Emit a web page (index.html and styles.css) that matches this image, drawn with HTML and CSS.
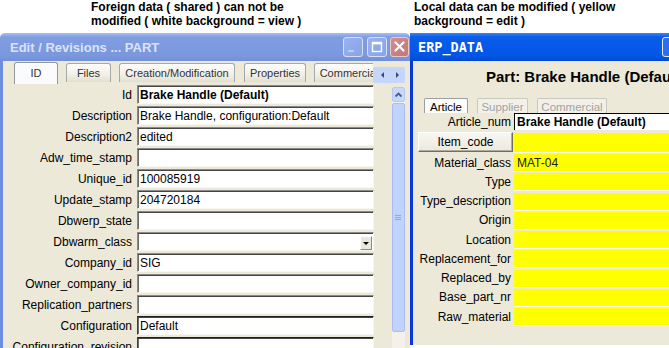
FILE: index.html
```html
<!DOCTYPE html>
<html lang="en">
<head>
  <meta charset="UTF-8">
  <title>Shared data vs local data</title>
  <link rel="stylesheet" href="styles.css">
</head>
<body>
  <div class="captions">
    <p class="cap cap-left">Foreign data ( shared ) can not be<br>modified ( white background = view )</p>
    <p class="cap">Local data can be modified ( yellow<br>background = edit )</p>
  </div>

  <div class="desk">
    <!-- shared window (inactive) -->
    <div class="win win-shared">
      <div class="titlebar">
        <span class="title">Edit / Revisions ... PART</span>
        <span class="tbtn"><svg width="18" height="18" viewBox="0 0 18 18"><rect x="4" y="12" width="6" height="2" fill="#b9cbf3"/></svg></span>
        <span class="tbtn"><svg width="18" height="18" viewBox="0 0 18 18"><rect x="4.5" y="4.5" width="9" height="9" fill="none" stroke="#fff" stroke-width="1.4"/><rect x="4" y="4" width="10" height="2.4" fill="#fff"/></svg></span>
        <span class="tbtn close"><svg width="17" height="18" viewBox="0 0 17 18"><path d="M4.5 4.5 L12.5 12.5 M12.5 4.5 L4.5 12.5" stroke="#fff" stroke-width="2.2" stroke-linecap="round"/></svg></span>
      </div>
      <div class="wbody">
        <div class="tabstrip">
          <div class="tabs">
            <span class="tab on t-id">ID</span>
            <span class="tab t-files">Files</span>
            <span class="tab t-crea">Creation/Modification</span>
            <span class="tab t-prop">Properties</span>
            <span class="tab t-comm">Commercial</span>
          </div>
          <div class="tabscroll">
            <svg width="32" height="16" viewBox="0 0 32 16"><path d="M11 5 L8 8 L11 11 Z" fill="#3b4a6b"/><path d="M23 5 L26 8 L23 11 Z" fill="#3b4a6b"/></svg>
          </div>
        </div>
        <div class="panel">
          <div class="form">
            <div class="row"><span class="lbl">Id</span><span class="field bold">Brake Handle (Default)</span></div>
            <div class="row"><span class="lbl">Description</span><span class="field">Brake Handle, configuration:Default</span></div>
            <div class="row"><span class="lbl">Description2</span><span class="field">edited</span></div>
            <div class="row"><span class="lbl">Adw_time_stamp</span><span class="field"></span></div>
            <div class="row"><span class="lbl">Unique_id</span><span class="field">100085919</span></div>
            <div class="row"><span class="lbl">Update_stamp</span><span class="field">204720184</span></div>
            <div class="row"><span class="lbl">Dbwerp_state</span><span class="field"></span></div>
            <div class="row"><span class="lbl">Dbwarm_class</span><span class="field combo"><span class="drop"><svg width="10" height="12" viewBox="0 0 10 12"><path d="M2 5 L8 5 L5 8 Z" fill="#000"/></svg></span></span></div>
            <div class="row"><span class="lbl">Company_id</span><span class="field">SIG</span></div>
            <div class="row"><span class="lbl">Owner_company_id</span><span class="field"></span></div>
            <div class="row"><span class="lbl">Replication_partners</span><span class="field"></span></div>
            <div class="row"><span class="lbl">Configuration</span><span class="field dark">Default</span></div>
            <div class="row"><span class="lbl">Configuration_revision</span><span class="field dark"></span></div>
          </div>
          <div class="vscroll">
            <div class="upbtn"><svg width="11" height="12" viewBox="0 0 11 12"><path d="M2.5 7.5 L5.5 4.5 L8.5 7.5" fill="none" stroke="#4a5f86" stroke-width="1.8"/></svg></div>
            <div class="thumb"><svg width="7" height="7" viewBox="0 0 7 7"><path d="M0 1.5 H6 M0 3.5 H6 M0 5.5 H6" stroke="#8ea7de" stroke-width="1"/></svg></div>
          </div>
        </div>
      </div>
    </div>

    <!-- local window (active) -->
    <div class="win win-local">
      <div class="titlebar">
        <span class="title mono">ERP_DATA</span>
        <span class="tbtn peek"></span>
      </div>
      <div class="lbody">
        <div class="heading">Part: Brake Handle (Default)</div>
        <div class="rtabs">
          <span class="rtab on r-art">Article</span>
          <span class="rtab r-sup">Supplier</span>
          <span class="rtab r-com">Commercial</span>
        </div>
        <div class="rrow">
          <span class="lbl">Article_num</span><span class="rfield white">Brake Handle (Default)</span>
        </div>
        <div class="rrow btnrow">
          <span class="btn">Item_code</span><span class="rfield yellow"></span>
        </div>
        <div class="rlist">
          <div class="rrow"><span class="lbl">Material_class</span><span class="rfield yellow">MAT-04</span></div>
          <div class="rrow"><span class="lbl">Type</span><span class="rfield yellow"></span></div>
          <div class="rrow"><span class="lbl">Type_description</span><span class="rfield yellow"></span></div>
          <div class="rrow"><span class="lbl">Origin</span><span class="rfield yellow"></span></div>
          <div class="rrow"><span class="lbl">Location</span><span class="rfield yellow"></span></div>
          <div class="rrow"><span class="lbl">Replacement_for</span><span class="rfield yellow"></span></div>
          <div class="rrow"><span class="lbl">Replaced_by</span><span class="rfield yellow"></span></div>
          <div class="rrow"><span class="lbl">Base_part_nr</span><span class="rfield yellow"></span></div>
          <div class="rrow"><span class="lbl">Raw_material</span><span class="rfield yellow"></span></div>
        </div>
      </div>
    </div>
  </div>
</body>
</html>
```

FILE: styles.css
```css
* { box-sizing: border-box; }
body { margin: 0; width: 669px; height: 348px; overflow: hidden; background: #fff; color: #000; font-family: "Liberation Sans", Arial, sans-serif; font-size: 12px; }

.captions { display: flex; height: 33px; }
.cap { margin: 0; font-weight: bold; font-size: 12px; line-height: 14px; white-space: nowrap; }
.cap-left { width: 414px; padding-left: 91px; }

.desk { display: flex; align-items: flex-start; height: 315px; }
.win { display: flex; flex-direction: column; overflow: hidden; }
.win-shared { width: 410px; height: 315px; flex-shrink: 0; }
.win-local { flex: 1; height: 312px; }

/* title bars */
.titlebar { height: 28px; flex-shrink: 0; display: flex; align-items: center; overflow: hidden; }
.win-shared .titlebar { padding: 0 1px 0 10px; border-radius: 5px 5px 0 0; background: linear-gradient(#aabff0, #819de2 4px, #7b97dd 80%, #7390d6); }
.win-local .titlebar { padding-left: 8px; background: linear-gradient(#3d83f5, #0a5de9 4px, #0256e6 80%, #0049d0); }
.title { flex: 1; white-space: nowrap; font: bold 13px "Liberation Sans", Arial, sans-serif; color: #d9e3f8; }
.title.mono { font: bold 13.5px "DejaVu Sans Mono", monospace; color: #fff; }
.tbtn { width: 20px; height: 20px; margin-left: 4px; display: flex; align-items: center; justify-content: center; border: 1px solid #d6e1f8; border-radius: 3px; background: linear-gradient(135deg, #9ab3ee, #86a3e8); }
.tbtn.close { width: 19px; margin-left: 3px; border-color: #e7c9c9; background: linear-gradient(135deg, #d48d8f, #c2777a); }
.tbtn.peek { width: 21px; margin-right: -14px; border-color: #e4ecff; background: #2c6ef2; }

/* shared window body */
.wbody { flex: 1; display: flex; flex-direction: column; overflow: hidden; background: #ece9d8; border-left: 3px solid #6d8de0; padding-right: 5px; }
.tabstrip { height: 23px; flex-shrink: 0; display: flex; align-items: flex-end; padding-left: 11px; }
.tabs { flex: 1; display: flex; align-items: flex-end; gap: 9px; overflow: hidden; height: 23px; }
.tab { flex-shrink: 0; height: 19px; margin-bottom: 2px; text-align: center; font-size: 11px; line-height: 18px; color: #333; white-space: nowrap; overflow: hidden; border: 1px solid #a3a9a9; border-bottom: 0; border-radius: 3px 3px 0 0; background: linear-gradient(#fdfdfc, #f1efe7 60%, #e2dfd2); }
.tab.on { height: 22px; margin-bottom: 0; line-height: 20px; background: #fbfbfd; border-color: #919b9c; }
.t-id { width: 44px; }
.t-files { width: 45px; margin-left: -1px; }
.t-crea { width: 116px; margin-left: -1px; }
.t-prop { width: 62px; }
.t-comm { width: 70px; margin-left: -1px; }
.tabscroll { width: 32px; height: 16px; margin-bottom: 1px; background: #c5d6fb; border-radius: 2px; }

.panel { flex: 1; display: flex; margin-top: 1px; overflow: hidden; }
.form { width: 371px; flex-shrink: 0; display: flex; flex-direction: column; gap: 2px; }
.row { height: 19px; flex-shrink: 0; display: flex; align-items: center; gap: 4px; }
.lbl { width: 130px; flex-shrink: 0; padding-right: 1px; text-align: right; white-space: nowrap; }
.field { width: 237px; height: 19px; display: flex; align-items: center; padding-left: 2px; background: #fff; white-space: nowrap; overflow: hidden; border-top: 1px solid #8a8a8a; border-left: 1px solid #8a8a8a; border-bottom: 1px solid #f7f6f0; border-right: 1px solid #f7f6f0; box-shadow: inset 0 1px 0 #454545, inset 1px 0 0 #6b6b6b; }
.field.bold { font-weight: bold; }
.field.dark { border-top-color: #202020; border-left-color: #404040; }
.combo { justify-content: flex-end; padding-right: 1px; }
.drop { width: 12px; height: 14px; margin-top: 3px; display: flex; align-items: center; justify-content: center; background: #e9e7dc; border: 1px solid; border-color: #fff #8c8a80 #8c8a80 #fff; }

.vscroll { width: 13px; margin-left: 18px; margin-top: 2px; display: flex; flex-direction: column; background: #f3f1ea; }
.upbtn { height: 15px; display: flex; align-items: center; justify-content: center; background: #c7d8fc; border: 1px solid #b3c8f6; border-radius: 2px; }
.thumb { height: 229px; margin-top: 1px; display: flex; align-items: center; justify-content: center; background: #c1d3fb; border: 1px solid #a9bff0; border-radius: 2px; }

/* local window body */
.lbody { flex: 1; overflow: hidden; background: #ece9d8; border-left: 3px solid #0a37d8; }
.heading { height: 18px; margin-top: 7px; padding-left: 73px; font-size: 15px; font-weight: bold; line-height: 18px; white-space: nowrap; }
.rtabs { height: 15px; margin-top: 12px; padding-left: 11px; display: flex; gap: 9px; overflow: hidden; }
.rtab { height: 18px; padding-top: 1px; text-align: center; font-size: 11.5px; line-height: 14px; color: #a3a3a3; border: 1px solid #cbc8bd; border-bottom: 0; border-radius: 2px 2px 0 0; background: #f2f0e8; }
.rtab.on { color: #000; background: #fcfcfb; border-color: #9aa0a0; }
.r-art { width: 44px; }
.r-sup { width: 51px; }
.r-com { width: 70px; }

.rrow { height: 17px; display: flex; align-items: center; gap: 3px; }
.rrow .lbl { width: 98px; padding-right: 0; }
.rfield { flex: 1; height: 17px; display: flex; align-items: center; padding-left: 3px; white-space: nowrap; }
.rfield.white { background: #fff; border-top: 1px solid #000; border-left: 1px solid #000; padding-left: 2px; font-weight: bold; }
.rfield.yellow { background: #ffff00; color: #222; box-shadow: 0 1px 0 #faf9f2; }
.btnrow { height: 20px; margin-top: 2px; align-items: stretch; }
.btn { width: 95px; margin-left: 5px; margin-right: -2px; display: flex; align-items: center; justify-content: center; background: linear-gradient(#f7f6f1, #ece9dd); border: 1px solid; border-color: #fff #6f6d64 #6f6d64 #fff; box-shadow: inset -1px -1px 0 #aeac9f; }
.btnrow .rfield { height: 19px; margin-top: 1px; }
.rlist { display: flex; flex-direction: column; gap: 2.25px; margin-top: 2px; }
```
